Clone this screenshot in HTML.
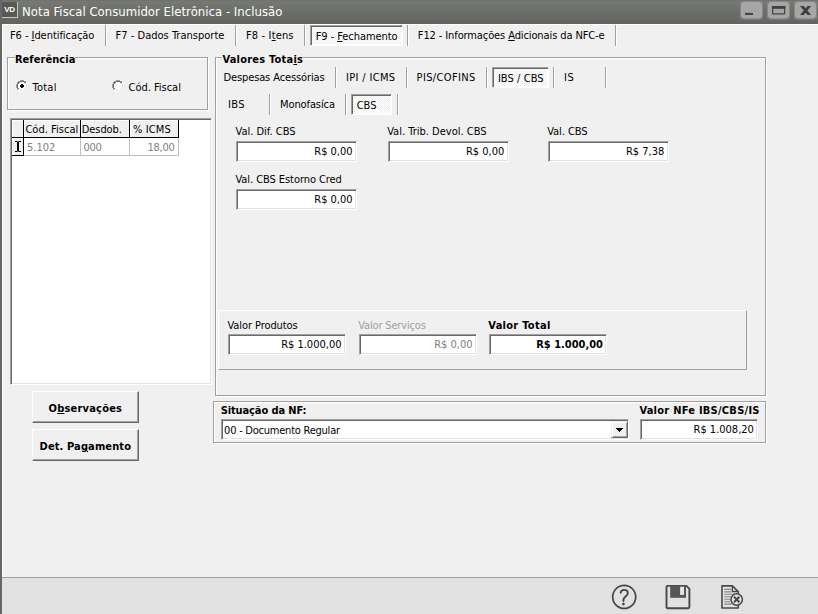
<!DOCTYPE html>
<html lang="pt-BR">
<head>
<meta charset="utf-8">
<title>Nota Fiscal Consumidor Eletrônica - Inclusão</title>
<style>
*{box-sizing:border-box;margin:0;padding:0}
html,body{width:818px;height:614px;overflow:hidden;background:#f0f0f0}
body{position:relative;font-family:"DejaVu Sans Condensed","Liberation Sans",sans-serif;font-size:11px;color:#000;line-height:13px}
.a{position:absolute;white-space:nowrap}
.t{height:13px}
.b{font-weight:bold}
.dis{color:#a0a0a0}
.gr{color:#808080}
.tt{font-size:13px;line-height:17px;height:17px;color:#fff}
u{text-decoration:underline;text-underline-offset:1px;text-decoration-thickness:1px}
.lbl{background:#f0f0f0}
#title{left:0;top:0;width:818px;height:24px;background:linear-gradient(#717171 0,#717171 1px,#767873 1px,#6c6e69 50%,#61635e 100%)}
#lb{left:0;top:0;width:2px;height:614px;background:#656564}
#topline{left:2px;top:24px;width:816px;height:1px;background:#fff}
#leftline{left:2px;top:24px;width:1px;height:553px;background:#fff}
#ico{left:2px;top:2px;width:16px;height:16px;background:#585856;border-right:1px solid #c4c4c2;border-bottom:1px solid #c4c4c2;color:#fff;font:bold 8px/15px "Liberation Sans",sans-serif;text-align:center;letter-spacing:-0.3px}
.grp{border:1px solid #a0a0a0;box-shadow:1px 1px 0 #fff, inset 1px 1px 0 #fff}
.sep{width:2px;border-left:1px solid #a0a0a0;border-right:1px solid #fff}
.ed{background:#fff;border:1px solid;border-color:#a0a0a0 #fff #fff #a0a0a0;box-shadow:inset 1px 1px 0 #696969, inset -1px -1px 0 #e3e3e3}
.sel{border:1px solid;border-color:#a0a0a0 #fff #fff #a0a0a0;box-shadow:inset 1px 1px 0 #696969, inset -1px -1px 0 #fbfbfb;background:#f8f8f8 conic-gradient(#fff 25%,#f0f0f0 0 50%,#fff 0 75%,#f0f0f0 0) 0 0/2px 2px}
.btn{background:#f0f0f0;border:1px solid;border-color:#fff #696969 #696969 #fff;box-shadow:inset -1px -1px 0 #a0a0a0}
.hd{background:#f0f0f0;border-right:1px solid #000;border-bottom:1px solid #000;box-shadow:inset 1px 1px 0 #fff;height:18px}
.cell{background:#fff;border-right:1px solid #c0c0c0;border-bottom:1px solid #c0c0c0;height:18px}
#bot{left:2px;top:577px;width:816px;height:37px;background:#e1e1e1;border-top:1px solid #a0a0a0}
.cbtn{background:#f0f0f0;border:1px solid;border-color:#f0f0f0 #696969 #696969 #f0f0f0;box-shadow:inset 1px 1px 0 #fff, inset -1px -1px 0 #a0a0a0}
</style>
</head>
<body>
<div class="a" id="title"></div>
<div class="a" id="lb"></div>
<div class="a" id="topline"></div>
<div class="a" id="leftline"></div>
<div class="a" id="ico">VD</div>
<svg class="a" style="left:736px;top:0" width="82" height="24" viewBox="736 0 82 24">
<rect x="740.5" y="1.500" width="22" height="17.600" rx="1.200" fill="none" stroke="#868683" stroke-width="1"/><rect x="741" y="2" width="21" height="16.600" rx="3" fill="#a6a6a6"/>
<rect x="767.5" y="1.500" width="22" height="17.600" rx="1.200" fill="none" stroke="#868683" stroke-width="1"/><rect x="768" y="2" width="21" height="16.600" rx="3" fill="#a6a6a6"/>
<rect x="794.5" y="1.500" width="22" height="17.600" rx="1.200" fill="none" stroke="#868683" stroke-width="1"/><rect x="795" y="2" width="21" height="16.600" rx="3" fill="#a6a6a6"/>
<rect x="745" y="12.800" width="8" height="2.200" fill="#484846"/>
<rect x="772.600" y="7" width="12" height="6.900" fill="none" stroke="#484846" stroke-width="1.300"/>
<rect x="771.900" y="6" width="13.400" height="2.800" fill="#40403e"/>
<clipPath id="cx"><rect x="799" y="6" width="14" height="9"/></clipPath><g clip-path="url(#cx)" stroke="#3e3e3c" stroke-width="2.800"><line x1="799.300" y1="3" x2="811.900" y2="18"/><line x1="811.900" y1="3" x2="799.300" y2="18"/></g>
</svg>

<!-- top tab strip -->
<div class="a sep" style="left:105px;top:25px;height:21px"></div>
<div class="a sep" style="left:235px;top:25px;height:21px"></div>
<div class="a sep" style="left:304px;top:25px;height:21px"></div>
<div class="a sel" style="left:310px;top:25px;width:93px;height:21px"></div>
<div class="a sep" style="left:407px;top:25px;height:21px"></div>
<div class="a sep" style="left:615px;top:25px;height:21px"></div>

<!-- Referência group -->
<div class="a grp" style="left:7px;top:57px;width:201px;height:53px"></div>
<svg class="a" style="left:16px;top:80px" width="12" height="12" viewBox="0 0 12 12" shape-rendering="crispEdges"><path d="M4 0h4v1h-4zM2 1h2v1h-2zM8 1h2v1h-2zM1 2h1v1h-1zM1 3h1v1h-1zM0 4h1v1h-1zM0 5h1v1h-1zM0 6h1v1h-1zM0 7h1v1h-1zM1 8h1v1h-1zM1 9h1v1h-1z" fill="#a0a0a0"/><path d="M4 1h4v1h-4zM2 2h2v1h-2zM8 2h2v1h-2zM2 3h1v1h-1zM1 4h1v1h-1zM1 5h1v1h-1zM1 6h1v1h-1zM1 7h1v1h-1zM2 8h1v1h-1z" fill="#696969"/><path d="M4 2h4v1h-4zM10 2h1v1h-1zM3 3h6v1h-6zM10 3h1v1h-1zM2 4h3v1h-3zM7 4h3v1h-3zM11 4h1v1h-1zM2 5h2v1h-2zM8 5h2v1h-2zM11 5h1v1h-1zM2 6h2v1h-2zM8 6h2v1h-2zM11 6h1v1h-1zM2 7h3v1h-3zM7 7h3v1h-3zM11 7h1v1h-1zM3 8h6v1h-6zM10 8h1v1h-1zM4 9h4v1h-4zM10 9h1v1h-1zM2 10h2v1h-2zM8 10h2v1h-2zM4 11h4v1h-4z" fill="#fff"/><path d="M9 3h1v1h-1zM10 4h1v1h-1zM10 5h1v1h-1zM10 6h1v1h-1zM10 7h1v1h-1zM9 8h1v1h-1zM2 9h2v1h-2zM8 9h2v1h-2zM4 10h4v1h-4z" fill="#e3e3e3"/><path d="M5 4h2v1h-2zM4 5h4v1h-4zM4 6h4v1h-4zM5 7h2v1h-2z" fill="#000"/></svg>
<svg class="a" style="left:112px;top:80px" width="12" height="12" viewBox="0 0 12 12" shape-rendering="crispEdges"><path d="M4 0h4v1h-4zM2 1h2v1h-2zM8 1h2v1h-2zM1 2h1v1h-1zM1 3h1v1h-1zM0 4h1v1h-1zM0 5h1v1h-1zM0 6h1v1h-1zM0 7h1v1h-1zM1 8h1v1h-1zM1 9h1v1h-1z" fill="#a0a0a0"/><path d="M4 1h4v1h-4zM2 2h2v1h-2zM8 2h2v1h-2zM2 3h1v1h-1zM1 4h1v1h-1zM1 5h1v1h-1zM1 6h1v1h-1zM1 7h1v1h-1zM2 8h1v1h-1z" fill="#696969"/><path d="M4 2h4v1h-4zM10 2h1v1h-1zM3 3h6v1h-6zM10 3h1v1h-1zM2 4h8v1h-8zM11 4h1v1h-1zM2 5h8v1h-8zM11 5h1v1h-1zM2 6h8v1h-8zM11 6h1v1h-1zM2 7h8v1h-8zM11 7h1v1h-1zM3 8h6v1h-6zM10 8h1v1h-1zM4 9h4v1h-4zM10 9h1v1h-1zM2 10h2v1h-2zM8 10h2v1h-2zM4 11h4v1h-4z" fill="#fff"/><path d="M9 3h1v1h-1zM10 4h1v1h-1zM10 5h1v1h-1zM10 6h1v1h-1zM10 7h1v1h-1zM9 8h1v1h-1zM2 9h2v1h-2zM8 9h2v1h-2zM4 10h4v1h-4z" fill="#e3e3e3"/></svg>

<!-- grid -->
<div class="a" style="left:10px;top:118px;width:202px;height:267px;background:#fff;border:1px solid;border-color:#a0a0a0 #fff #fff #a0a0a0;box-shadow:inset 1px 1px 0 #696969, inset -1px -1px 0 #e3e3e3"></div>
<div class="a hd" style="left:12px;top:120px;width:12px"></div>
<div class="a hd" style="left:24px;top:120px;width:57px"></div>
<div class="a hd" style="left:81px;top:120px;width:49px"></div>
<div class="a hd" style="left:130px;top:120px;width:49px"></div>
<div class="a hd" style="left:12px;top:138px;width:12px"></div>
<div class="a cell" style="left:24px;top:138px;width:57px"></div>
<div class="a cell" style="left:81px;top:138px;width:49px"></div>
<div class="a cell" style="left:130px;top:138px;width:49px"></div>
<svg class="a" style="left:14px;top:140px" width="8" height="13" viewBox="0 0 8 13"><path d="M1 1.5h2.2M4.8 1.5H7M1 11.5h2.2M4.8 11.5H7" stroke="#000" stroke-width="1"/><rect x="3" y="1.5" width="2" height="10" fill="#000"/></svg>

<!-- Valores Totais group -->
<div class="a grp" style="left:215px;top:57px;width:551px;height:339px"></div>
<div class="a sep" style="left:335px;top:67px;height:21px"></div>
<div class="a sep" style="left:406px;top:67px;height:21px"></div>
<div class="a sep" style="left:486px;top:67px;height:21px"></div>
<div class="a sel" style="left:492px;top:67px;width:57px;height:21px"></div>
<div class="a sep" style="left:553px;top:67px;height:21px"></div>
<div class="a sep" style="left:605px;top:67px;height:21px"></div>
<div class="a sep" style="left:269px;top:94px;height:21px"></div>
<div class="a sep" style="left:345px;top:94px;height:21px"></div>
<div class="a sel" style="left:351px;top:94px;width:41px;height:21px"></div>
<div class="a sep" style="left:397px;top:94px;height:21px"></div>

<div class="a ed" style="left:236px;top:141px;width:121px;height:21px"></div>
<div class="a ed" style="left:388px;top:141px;width:121px;height:21px"></div>
<div class="a ed" style="left:548px;top:141px;width:121px;height:21px"></div>
<div class="a ed" style="left:236px;top:189px;width:121px;height:21px"></div>

<!-- totals panel -->
<div class="a" style="left:218px;top:310px;width:529px;height:60px;border:1px solid;border-color:#fff #a0a0a0 #a0a0a0 #fff"></div>
<div class="a ed" style="left:228px;top:334px;width:118px;height:21px"></div>
<div class="a ed" style="left:359px;top:334px;width:118px;height:21px"></div>
<div class="a ed" style="left:489px;top:334px;width:118px;height:21px"></div>

<!-- Situação panel -->
<div class="a grp" style="left:213px;top:401px;width:553px;height:42px"></div>
<div class="a ed" style="left:221px;top:419px;width:408px;height:21px"></div>
<div class="a cbtn" style="left:611px;top:421px;width:17px;height:17px"></div>
<svg class="a" style="left:616px;top:428px" width="7" height="4" viewBox="0 0 7 4" shape-rendering="crispEdges"><path d="M0 0h7v1h-1v1h-1v1h-1v1h-1v-1h-1v-1h-1v-1h-1z" fill="#000"/></svg>
<div class="a ed" style="left:640px;top:419px;width:118px;height:21px"></div>

<!-- buttons -->
<div class="a btn" style="left:32px;top:391px;width:107px;height:32px"></div>
<div class="a btn" style="left:32px;top:429px;width:107px;height:32px"></div>

<!-- bottom bar -->
<div class="a" id="bot"></div>
<svg class="a" style="left:610px;top:583px" width="28" height="28" viewBox="0 0 28 28"><circle cx="14.200" cy="13.900" r="11.500" fill="none" stroke="#464646" stroke-width="1.700"/><path d="M10.700 9.700C10.900 7.900 12.200 6.900 14.100 6.900c2.200 0 3.700 1.200 3.700 3 0 1.700-1 2.600-2.200 3.600-1.400 1.200-2.200 2.100-2.200 3.600v1" fill="none" stroke="#464646" stroke-width="1.900" stroke-linecap="round"/><circle cx="13.400" cy="21.100" r="1.350" fill="#464646"/></svg>
<svg class="a" style="left:665px;top:584px" width="26" height="26" viewBox="0 0 26 26"><path d="M2.700 1.900h18.700l3 3v18.100a1.200 1.200 0 0 1-1.200 1.200h-20.500a1.200 1.200 0 0 1-1.200-1.200v-19.900a1.200 1.200 0 0 1 1.200-1.200z" fill="none" stroke="#484848" stroke-width="1.900"/><rect x="5.200" y="1.700" width="15.800" height="12.100" fill="#555"/><rect x="15.100" y="2.800" width="3.900" height="8.100" fill="#e6e6e6"/></svg>
<svg class="a" style="left:720px;top:584px" width="26" height="26" viewBox="0 0 26 26"><path d="M1.950 1.850h10.400l5.900 5.700v16.500h-16.300z" fill="none" stroke="#4a4a4a" stroke-width="1.600" stroke-linejoin="round"/><path d="M12.350 2v5.500h5.700" fill="none" stroke="#484848" stroke-width="1.300"/><path d="M4.200 5.400h7M4.200 7.900h7M4.200 10.300h11M4.200 12.800h7M4.200 15.200h6M4.200 17.700h6M4.200 20.100h8" stroke="#888" stroke-width="1.100"/><circle cx="16.700" cy="15.500" r="5.700" fill="#e1e1e1" stroke="#484848" stroke-width="1.500"/><path d="M14 12.800l5.400 5.400M19.400 12.800l-5.400 5.400" stroke="#484848" stroke-width="2"/></svg>

<div class="a t tt" style="left:22.10px;top:3px;letter-spacing:0.020px;">Nota Fiscal Consumidor Eletrônica - Inclusão</div>
<div class="a t " style="left:9.90px;top:29px;letter-spacing:-0.048px;">F6 - <u>I</u>dentificação</div>
<div class="a t " style="left:115.60px;top:29px;letter-spacing:0.013px;">F7 - Dados Transporte</div>
<div class="a t " style="left:246.00px;top:29px;letter-spacing:0.151px;">F8 - I<u>t</u>ens</div>
<div class="a t " style="left:315.70px;top:30px;letter-spacing:-0.058px;">F9 - <u>F</u>echamento</div>
<div class="a t " style="left:417.80px;top:29px;letter-spacing:-0.109px;">F12 - Informações <u>A</u>dicionais da NFC-e</div>
<div class="a t b lbl" style="left:14.90px;top:53px;letter-spacing:0.056px;">Referência</div>
<div class="a t b lbl" style="left:222.40px;top:53px;letter-spacing:0.225px;">Valores Tota<u>i</u>s</div>
<div class="a t " style="left:32.50px;top:81px;letter-spacing:0.256px;">Total</div>
<div class="a t " style="left:128.50px;top:81px;letter-spacing:-0.018px;">Cód. Fiscal</div>
<div class="a t " style="left:223.50px;top:71px;letter-spacing:-0.120px;">Despesas Acessórias</div>
<div class="a t " style="left:346.00px;top:71px;letter-spacing:0.342px;">IPI / ICMS</div>
<div class="a t " style="left:416.60px;top:71px;letter-spacing:0.360px;">PIS/COFINS</div>
<div class="a t " style="left:497.90px;top:72px;letter-spacing:0.065px;">IBS / CBS</div>
<div class="a t " style="left:564.10px;top:71px;letter-spacing:0.598px;">IS</div>
<div class="a t " style="left:227.90px;top:98px;letter-spacing:0.401px;">IBS</div>
<div class="a t " style="left:280.00px;top:98px;letter-spacing:-0.099px;">Monofasíca</div>
<div class="a t " style="left:356.70px;top:99px;letter-spacing:0.001px;">CBS</div>
<div class="a t " style="left:235.50px;top:125px;letter-spacing:-0.003px;">Val. Dif. CBS</div>
<div class="a t " style="left:387.20px;top:125px;letter-spacing:0.010px;">Val. Trib. Devol. CBS</div>
<div class="a t " style="left:547.20px;top:125px;letter-spacing:-0.052px;">Val. CBS</div>
<div class="a t " style="left:235.50px;top:173px;letter-spacing:-0.069px;">Val. CBS Estorno Cred</div>
<div class="a t " style="left:227.40px;top:319px;letter-spacing:-0.071px;">Valor Produtos</div>
<div class="a t dis" style="left:358.30px;top:319px;letter-spacing:-0.163px;">Valor Serviços</div>
<div class="a t b" style="left:488.30px;top:319px;letter-spacing:0.287px;">Valor Total</div>
<div class="a t b" style="left:220.70px;top:404px;letter-spacing:-0.112px;">Situação da NF:</div>
<div class="a t b" style="left:639.40px;top:404px;letter-spacing:0.249px;">Valor NFe IBS/CBS/IS</div>
<div class="a t " style="left:224.10px;top:424px;letter-spacing:-0.233px;">00 - Documento Regular</div>
<div class="a t b" style="left:48.50px;top:402px;letter-spacing:0.209px;">O<u>b</u>servações</div>
<div class="a t b" style="left:39.60px;top:440px;letter-spacing:0.116px;">Det. Pa<u>g</u>amento</div>
<div class="a t " style="left:25.40px;top:123px;letter-spacing:0.037px;">Cód. Fiscal</div>
<div class="a t " style="left:81.80px;top:123px;letter-spacing:-0.092px;">Desdob.</div>
<div class="a t " style="left:132.90px;top:123px;letter-spacing:0.149px;">% ICMS</div>
<div class="a t gr" style="left:27.00px;top:141px;letter-spacing:0.014px;">5.102</div>
<div class="a t gr" style="left:83.40px;top:141px;letter-spacing:-0.297px;">000</div>
<div class="a t gr" style="left:147.40px;top:141px;letter-spacing:-0.246px;">18,00</div>
<div class="a t " style="right:465.40px;top:145px;">R$ 0,00</div>
<div class="a t " style="right:313.70px;top:145px;">R$ 0,00</div>
<div class="a t " style="right:153.70px;top:145px;">R$ 7,38</div>
<div class="a t " style="right:465.40px;top:193px;">R$ 0,00</div>
<div class="a t " style="right:476.50px;top:338px;">R$ 1.000,00</div>
<div class="a t gr" style="right:345.50px;top:338px;">R$ 0,00</div>
<div class="a t b" style="right:215.00px;top:338px;">R$ 1.000,00</div>
<div class="a t " style="right:64.10px;top:423px;">R$ 1.008,20</div>
</body>
</html>
